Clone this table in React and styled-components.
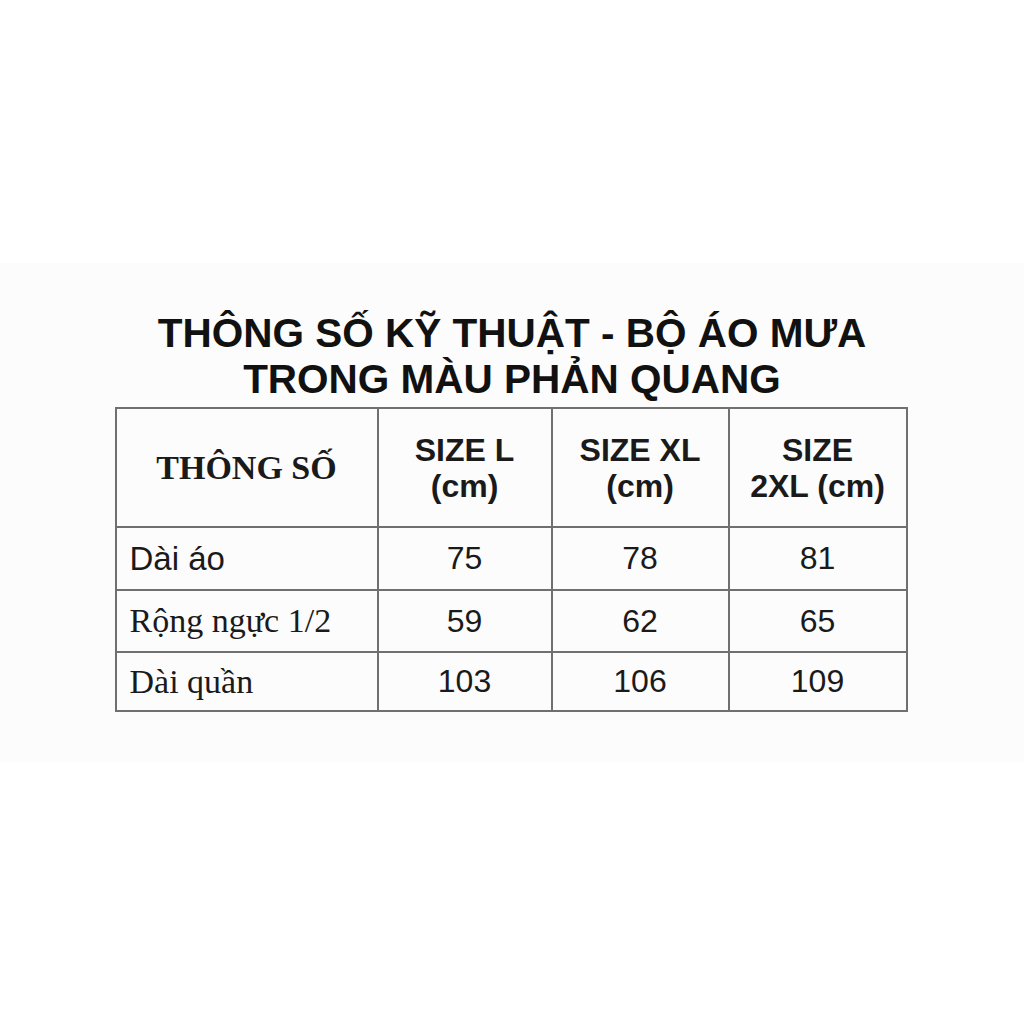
import React from "react";
import styled, { createGlobalStyle } from "styled-components";

const Global = createGlobalStyle`
  html, body { margin: 0; padding: 0; background: #ffffff; }
  body { font-family: "Liberation Sans", Arial, sans-serif; }
`;

const Page = styled.div`
  width: 1024px;
  height: 1024px;
  background: #ffffff;
  padding-top: 263px;
  box-sizing: border-box;
`;

const Band = styled.section`
  background: #fcfcfc;
  padding: 47px 0 50px;
  display: flex;
  flex-direction: column;
  align-items: center;
`;

const Title = styled.h1`
  margin: 0 0 5px;
  font-family: "Liberation Sans", Arial, sans-serif;
  font-weight: 700;
  font-size: 40.5px;
  line-height: 46px;
  color: #111;
  text-align: center;
`;

const Table = styled.table`
  width: 791px;
  margin-left: -2px;
  border-collapse: collapse;
  table-layout: fixed;
  border: 2px solid #8c8c8c;
`;

const Row = styled.tr`
  height: ${(p) => p.$h}px;
`;

const Cell = styled.td`
  border: 2px solid #707070;
  padding: 0;
  vertical-align: middle;
  text-align: ${(p) => (p.$left ? "left" : "center")};
  padding-left: ${(p) => (p.$left ? "13px" : "0")};
  font-family: ${(p) =>
    p.$serif
      ? '"Liberation Serif", "Times New Roman", serif'
      : '"Liberation Sans", Arial, sans-serif'};
  font-size: ${(p) => (p.$serif ? "34px" : p.$left ? "33px" : "32px")};
  color: #1a1a1a;
`;

const HeadCell = styled.th`
  border: 2px solid #707070;
  padding: 0;
  vertical-align: middle;
  text-align: center;
  font-family: ${(p) =>
    p.$serif
      ? '"Liberation Serif", "Times New Roman", serif'
      : '"Liberation Sans", Arial, sans-serif'};
  font-weight: 700;
  font-size: ${(p) => (p.$serif ? "34px" : "32px")};
  line-height: 36px;
  color: #1a1a1a;
`;

const rows = [
  { label: "Dài áo", serif: false, vals: ["75", "78", "81"], h: 63 },
  { label: "Rộng ngực 1/2", serif: true, vals: ["59", "62", "65"], h: 62 },
  { label: "Dài quần", serif: true, vals: ["103", "106", "109"], h: 59 },
];

export default function App() {
  return (
    <>
      <Global />
      <Page>
        <Band>
          <Title>
            THÔNG SỐ KỸ THUẬT - BỘ ÁO MƯA
            <br />
            TRONG MÀU PHẢN QUANG
          </Title>
          <Table>
            <colgroup>
              <col style={{ width: 262 }} />
              <col style={{ width: 174 }} />
              <col style={{ width: 177 }} />
              <col style={{ width: 178 }} />
            </colgroup>
            <thead>
              <Row $h={119}>
                <HeadCell $serif>THÔNG SỐ</HeadCell>
                <HeadCell>
                  SIZE L
                  <br />
                  (cm)
                </HeadCell>
                <HeadCell>
                  SIZE XL
                  <br />
                  (cm)
                </HeadCell>
                <HeadCell>
                  SIZE
                  <br />
                  2XL (cm)
                </HeadCell>
              </Row>
            </thead>
            <tbody>
              {rows.map((r) => (
                <Row key={r.label} $h={r.h}>
                  <Cell $left $serif={r.serif}>
                    {r.label}
                  </Cell>
                  {r.vals.map((v) => (
                    <Cell key={v}>{v}</Cell>
                  ))}
                </Row>
              ))}
            </tbody>
          </Table>
        </Band>
      </Page>
    </>
  );
}
